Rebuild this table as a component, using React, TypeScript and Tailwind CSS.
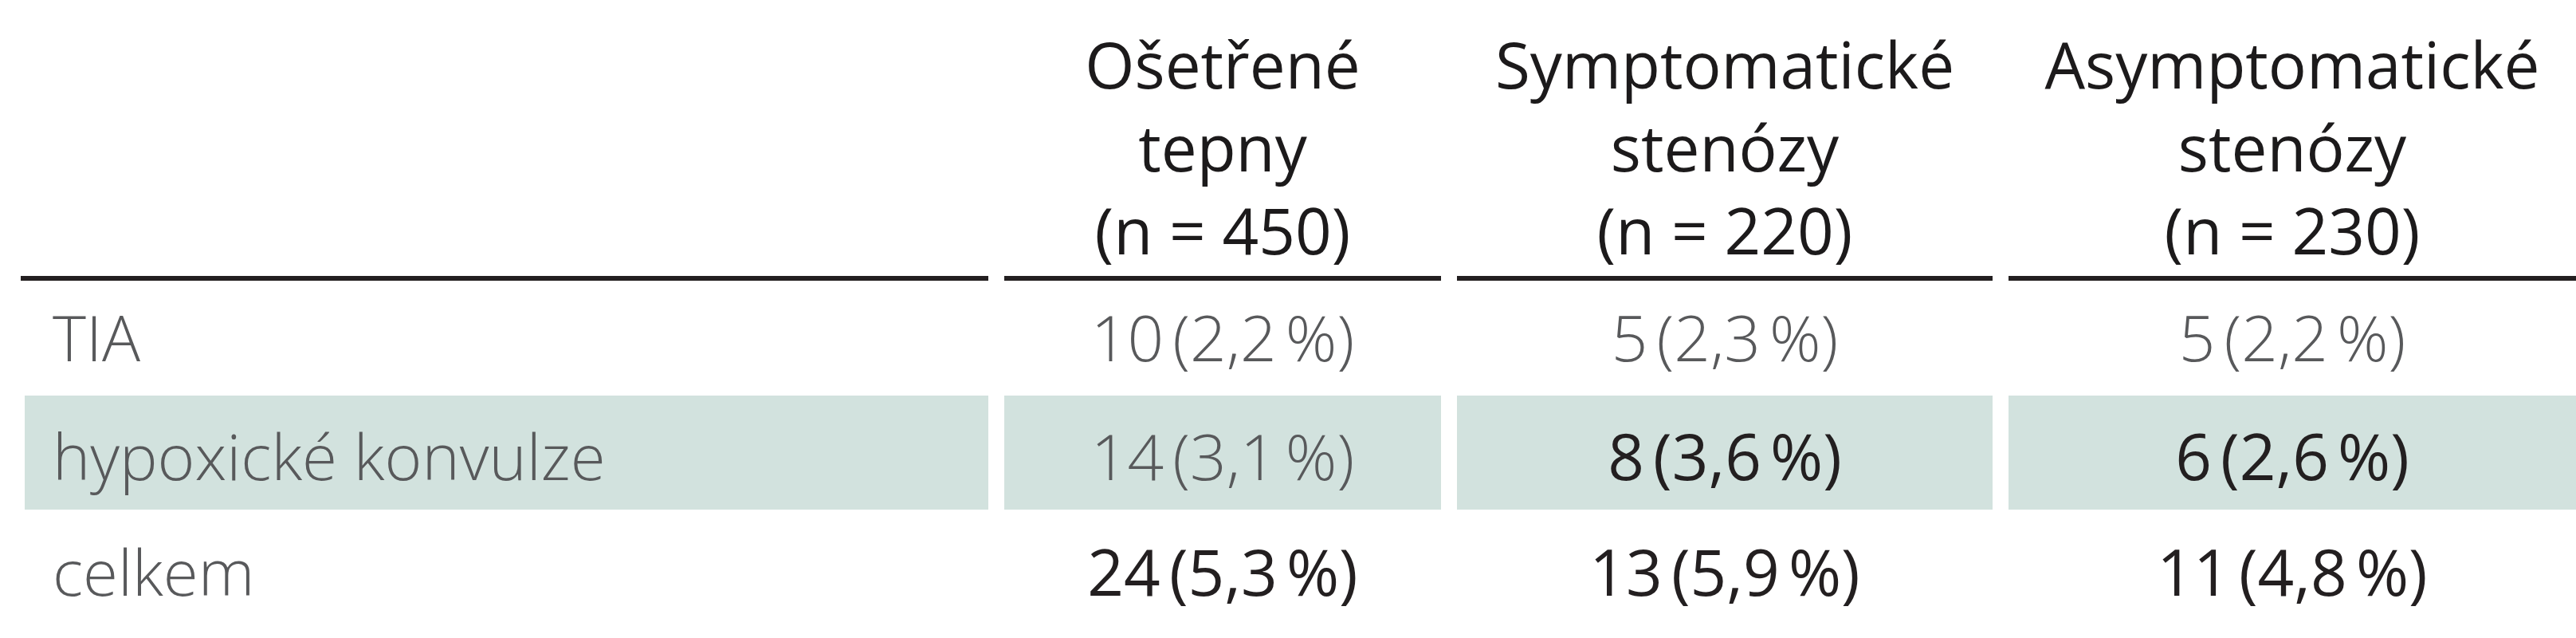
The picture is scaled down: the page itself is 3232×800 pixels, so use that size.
import React from 'react';

type Cell = { text: string; strong?: boolean };

const cols = 'grid grid-cols-[1214px_548px_672px_712px] gap-x-[20px]';

const headers = [
  ['Ošetřené', 'tepny', '(n = 450)'],
  ['Symptomatické', 'stenózy', '(n = 220)'],
  ['Asymptomatické', 'stenózy', '(n = 230)'],
];

const rows: { label: string; shaded?: boolean; cells: Cell[] }[] = [
  {
    label: 'TIA',
    cells: [{ text: '10 (2,2 %)' }, { text: '5 (2,3 %)' }, { text: '5 (2,2 %)' }],
  },
  {
    label: 'hypoxické konvulze',
    shaded: true,
    cells: [{ text: '14 (3,1 %)' }, { text: '8 (3,6 %)', strong: true }, { text: '6 (2,6 %)', strong: true }],
  },
  {
    label: 'celkem',
    cells: [
      { text: '24 (5,3 %)', strong: true },
      { text: '13 (5,9 %)', strong: true },
      { text: '11 (4,8 %)', strong: true },
    ],
  },
];

export default function App() {
  return (
    <div className="w-[3232px] h-[800px] overflow-hidden bg-white pl-[26px] font-['Open_Sans',sans-serif] text-[80px] leading-[104px]">
      {/* header */}
      <div className={cols}>
        <div className="border-b-[6px] border-[#231f20]" />
        {headers.map((lines) => (
          <div
            key={lines[0]}
            className="border-b-[6px] border-[#231f20] pt-[28px] pb-[6px] text-center font-normal text-[#1c1a1b]"
          >
            {lines.map((l) => (
              <div key={l}>{l}</div>
            ))}
          </div>
        ))}
      </div>

      {/* body */}
      {rows.map((row, i) => (
        <div
          key={row.label}
          className={
            cols +
            (i === 0 ? ' h-[144px]' : ' h-[143px]') +
            (i === 2 ? ' mt-[2px]' : '')
          }
        >
          <div
            className={
              row.shaded
                ? 'ml-[5px] bg-[#d2e2de] pl-[35px] pt-[23px] font-light text-[#58595b]'
                : 'pl-[40px] font-light text-[#58595b] ' + (i === 0 ? 'pt-[18px]' : 'pt-[23px]')
            }
          >
            {row.label}
          </div>
          {row.cells.map((c, j) => (
            <div
              key={j}
              className={
                'text-center [word-spacing:-0.12em] ' +
                (i === 0 ? 'pt-[18px] ' : 'pt-[23px] ') +
                (row.shaded ? 'bg-[#d2e2de] ' : '') +
                (c.strong ? 'font-normal text-[#231f20]' : 'font-light text-[#58595b]')
              }
            >
              {c.text}
            </div>
          ))}
        </div>
      ))}
    </div>
  );
}
